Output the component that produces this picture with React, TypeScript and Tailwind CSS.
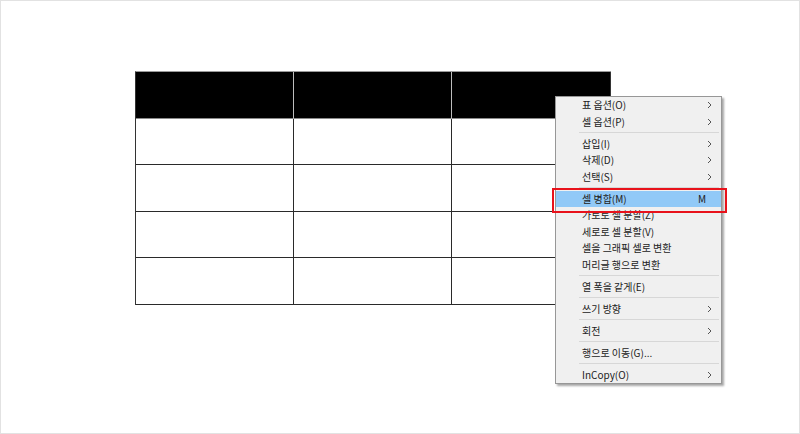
import React from "react";

type Item =
  | { type: "sep" }
  | { type: "item"; label: string; arrow?: boolean; shortcut?: string; active?: boolean };

const items: Item[] = [
  { type: "item", label: "표 옵션(O)", arrow: true },
  { type: "item", label: "셀 옵션(P)", arrow: true },
  { type: "sep" },
  { type: "item", label: "삽입(I)", arrow: true },
  { type: "item", label: "삭제(D)", arrow: true },
  { type: "item", label: "선택(S)", arrow: true },
  { type: "sep" },
  { type: "item", label: "셀 병합(M)", shortcut: "M", active: true },
  { type: "item", label: "가로로 셀 분할(Z)" },
  { type: "item", label: "세로로 셀 분할(V)" },
  { type: "item", label: "셀을 그래픽 셀로 변환" },
  { type: "item", label: "머리글 행으로 변환" },
  { type: "sep" },
  { type: "item", label: "열 폭을 같게(E)" },
  { type: "sep" },
  { type: "item", label: "쓰기 방향", arrow: true },
  { type: "sep" },
  { type: "item", label: "회전", arrow: true },
  { type: "sep" },
  { type: "item", label: "행으로 이동(G)..." },
  { type: "sep" },
  { type: "item", label: "InCopy(O)", arrow: true },
];

function Arrow() {
  return (
    <svg width="5" height="8" viewBox="0 0 5 8" className="block">
      <path d="M1 1 L4 4 L1 7" fill="none" stroke="#555" strokeWidth="1" />
    </svg>
  );
}

const rowHeights = ["h-[47px]", "h-[46px]", "h-[47px]", "h-[46px]", "h-[47px]"];

export default function App() {
  return (
    <div
      className="relative w-[800px] h-[434px] bg-white border border-[#e2e2e2] overflow-hidden"
      style={{ fontFamily: '"Noto Sans CJK KR", "Noto Sans", sans-serif' }}
    >
      <div className="pt-[70px] pl-[134px]">
        <div className="w-[476px] border-l border-t border-l-[#333] border-t-[#9a9a9a]">
          {rowHeights.map((h, r) => (
            <div key={r} className="flex">
              {[158, 158, 159].map((w, c) => (
                <div
                  key={c}
                  style={{ width: w }}
                  className={`${h} border-r border-b ${
                    r === 0
                      ? "bg-black border-b-[#8a8a8a] " + (c === 2 ? "border-r-[#333]" : "border-r-[#bdbdbd]")
                      : "bg-white border-[#2a2a2a]"
                  }`}
                />
              ))}
            </div>
          ))}
        </div>
      </div>

      {/* context menu */}
      <div className="absolute left-[554px] top-[95px] w-[167px] bg-[#f0f0f0] border border-[#979797] shadow-[2px_2px_2px_rgba(0,0,0,0.35)] text-[10px] text-[#222]">
        {items.map((it, i) =>
          it.type === "sep" ? (
            <div key={i} className="h-[5.5px] flex items-center pl-[23px] pr-[2px]">
              <div className="h-px w-full bg-[#d7d7d7]" />
            </div>
          ) : (
            <div
              key={i}
              className={`h-[16.5px] flex items-center pl-[26px] pr-[9px] ${
                it.active ? "bg-[#91c9f7]" : ""
              }`}
            >
              <span className="flex-1 leading-none whitespace-nowrap">{it.label}</span>
              {it.shortcut && <span className="pr-[6px] leading-none">{it.shortcut}</span>}
              {it.arrow && <Arrow />}
            </div>
          )
        )}
      </div>

      {/* red highlight frame */}
      <div className="absolute left-[551px] top-[187px] w-[175px] h-[25px] border-2 border-[#e8121b]" />
    </div>
  );
}
